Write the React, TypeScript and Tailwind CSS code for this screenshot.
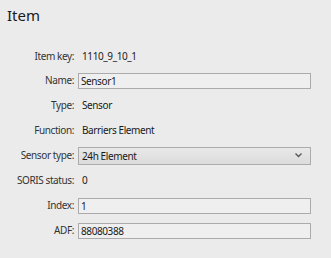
import React from "react";

const font = { fontFamily: '"Noto Sans", "Open Sans", sans-serif' };

function Row({ label, h = "h-[25px]", children }: { label: string; h?: string; children: React.ReactNode }) {
  return (
    <div className={`flex items-center ${h}`}>
      <div className="w-[74px] shrink-0 text-right text-[10px] tracking-[-0.4px] text-[#333] whitespace-nowrap">{label}</div>
      <div className="ml-[4px] w-[233px] flex items-center">{children}</div>
    </div>
  );
}

function Text({ v }: { v: string }) {
  return <span className="pl-[4px] text-[10px] tracking-[-0.4px] text-[#1a1a1a]">{v}</span>;
}

function Box({ v }: { v: string }) {
  return (
    <div className="h-[16px] w-full border border-[#ababab] bg-[#efefef] flex items-center pl-[2px] text-[10px] tracking-[-0.4px] text-[#1a1a1a] leading-none">
      {v}
    </div>
  );
}

export default function App() {
  return (
    <div className="w-[331px] h-[258px] bg-[#ebebeb] overflow-hidden" style={font}>
      <div className="pl-[7px] pt-[5px] text-[15px] text-[#1a1a1a] leading-[20px]">Item</div>
      <div className="mt-[20px] flex flex-col">
        <Row label="Item key:" h="h-[23px]"><Text v="1110_9_10_1" /></Row>
        <Row label="Name:"><Box v="Sensor1" /></Row>
        <Row label="Type:"><Text v="Sensor" /></Row>
        <Row label="Function:"><Text v="Barriers Element" /></Row>
        <Row label="Sensor type:">
          <div className="h-[18px] w-full border border-[#acacac] bg-gradient-to-b from-[#e8e8e8] to-[#dcdcdc] flex items-center justify-between pl-[3px] pr-[8px] text-[10px] tracking-[-0.4px] text-[#1a1a1a] leading-none">
            <span>24h Element</span>
            <svg width="7" height="5" viewBox="0 0 7 5"><path d="M0.5 0.5 L3.5 3.5 L6.5 0.5" fill="none" stroke="#555" strokeWidth="1.3" /></svg>
          </div>
        </Row>
        <Row label="SORIS status:"><Text v="0" /></Row>
        <Row label="Index:"><Box v="1" /></Row>
        <Row label="ADF:"><Box v="88080388" /></Row>
      </div>
    </div>
  );
}
